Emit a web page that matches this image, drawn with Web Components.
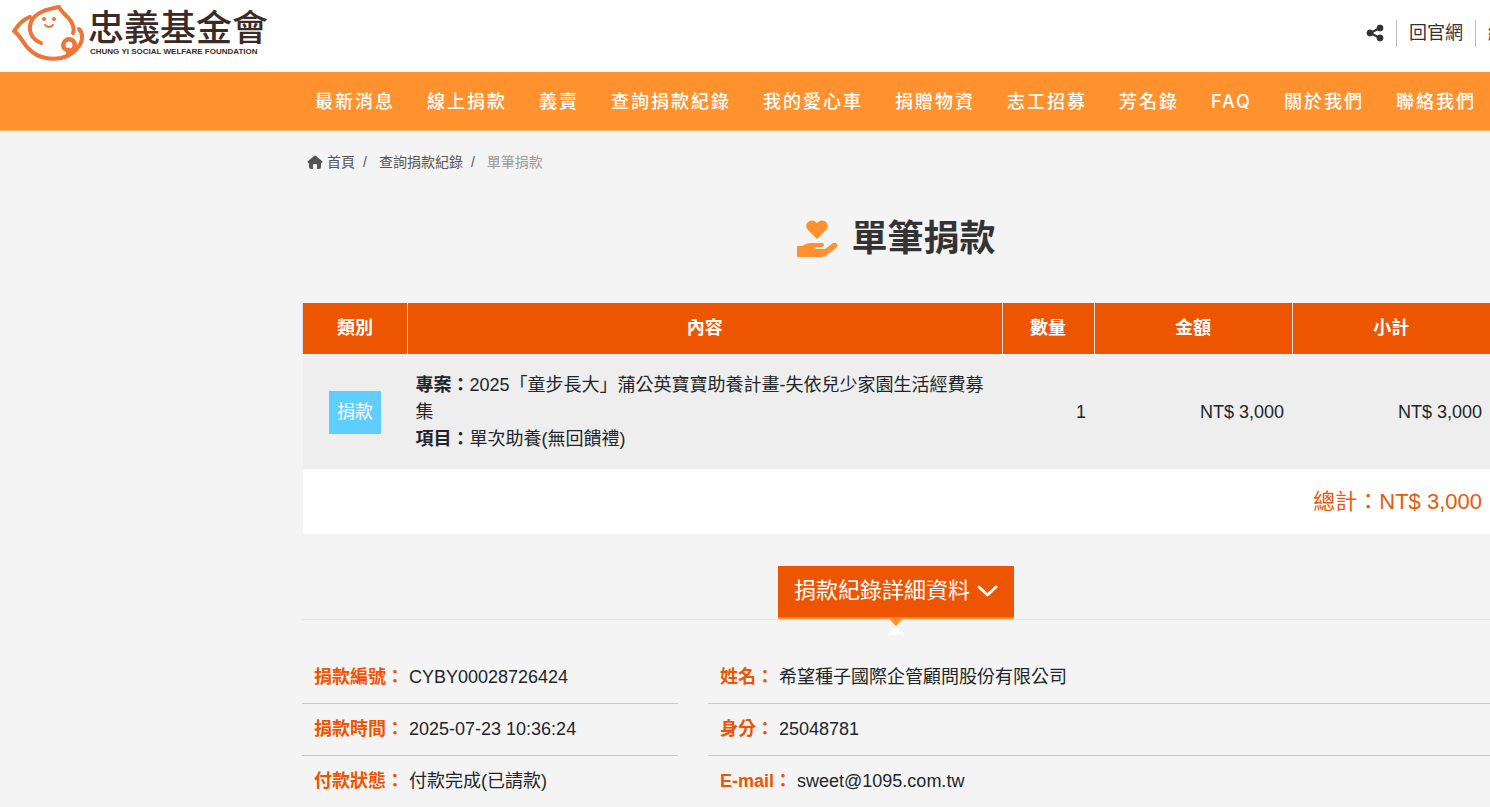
<!DOCTYPE html>
<html lang="zh-Hant">
<head>
<meta charset="utf-8">
<meta name="viewport" content="width=device-width, initial-scale=1">
<title>單筆捐款 - 忠義基金會</title>
<style>
  body {
    margin: 0;
    min-height: 100vh;
    overflow-x: hidden;
    background-color: #f4f4f4;
    color: #212529;
    font: 18px/27px "Liberation Sans", "Noto Sans CJK TC", sans-serif;
    --brand: #ff922e;
    --accent: #ee5500;
    --side: 302px;
  }
</style>
</head>
<body>
  <site-header></site-header>
  <site-nav></site-nav>
  <main>
    <donation-page></donation-page>
  </main>

<script>
const makeTemplate = (html) => {
  const template = document.createElement('template');
  template.innerHTML = html;
  return template;
};

class BaseElement extends HTMLElement {
  constructor() {
    super();
    this.attachShadow({ mode: 'open' });
    this.shadowRoot.append(this.constructor.template.content.cloneNode(true));
  }
}

class SiteLogo extends BaseElement {
  static template = makeTemplate(`
    <style>
      :host {
        display: block;
      }

      a {
        display: flex;
        gap: 3px;
        color: #3b2b26;
        text-decoration: none;
      }

      .name {
        display: block;
        font-size: 36px;
        line-height: 36px;
        margin-top: 7px;
        font-weight: 500;
      }

      .sub {
        display: block;
        font-size: 8px;
        line-height: 10px;
        font-weight: bold;
        padding-left: 2px;
      }
    </style>
    <a href="#">
      <svg width="74" height="60" viewBox="0 0 74 60" fill="none" stroke="#ee7437" stroke-width="4" stroke-linecap="round" stroke-linejoin="round" aria-hidden="true">
        <path d="M19 13C13 15 7 21 3 27C10 32 12 40 19 46C27 54 40 56 50 54C62 51 72 41 71 32C71 29 70 27 68 25"/>
        <path d="M30 39C20 35 17 26 20 18C24 8 37 5 48 3C51 10 60 13 62 22C63 25 63 27 62 29"/>
        <path d="M57 49C61 49 64 45 64 41C64 37 61 35 58 35C55 35 52 38 52 41C52 44 54 46 57 46"/>
        <circle cx="58" cy="41" r="5" stroke-width="3"/>
        <path d="M34 21Q38 25 42 21" stroke-width="2"/>
        <circle cx="33" cy="15" r="2" fill="#ee7437" stroke="none"/>
        <circle cx="43" cy="15" r="2" fill="#ee7437" stroke="none"/>
      </svg>
      <span>
        <span class="name">忠義基金會</span>
        <span class="sub">CHUNG YI SOCIAL WELFARE FOUNDATION</span>
      </span>
    </a>
  `);
}

class SiteHeader extends BaseElement {
  static template = makeTemplate(`
    <style>
      :host {
        display: block;
        overflow: hidden;
        background-color: #fff;
      }

      header {
        display: flex;
        justify-content: space-between;
        height: 68px;
        padding: 4px 0 0 11px;
      }

      .tools {
        display: flex;
        align-items: center;
        height: 58px;
        margin-right: -82px;
        white-space: nowrap;
      }

      .tools a, .tools button {
        color: #333;
        text-decoration: none;
        padding: 0 12px;
        border-left: 1px solid #bbb;
      }

      .tools button {
        display: flex;
        border: 0;
        background: none;
      }
    </style>
    <header>
      <site-logo></site-logo>
      <div class="tools">
        <button type="button" aria-label="分享">
          <svg width="18" height="18" viewBox="0 0 18 18" fill="#333" stroke="#333" aria-hidden="true">
            <path d="M14 4L4 9L14 14" fill="none" stroke-width="2"/>
            <circle cx="14" cy="4" r="3"/>
            <circle cx="4" cy="9" r="3"/>
            <circle cx="14" cy="14" r="3"/>
          </svg>
        </button>
        <a href="#">回官網</a>
        <a href="#">線上捐款</a>
      </div>
    </header>
  `);
}

class SiteNav extends BaseElement {
  static template = makeTemplate(`
    <style>
      :host {
        display: block;
        overflow: hidden;
        background-color: var(--brand);
        border-bottom: 1px solid #ffb36b;
      }

      nav {
        display: flex;
        padding-left: calc(var(--side) - 3px);
        white-space: nowrap;
      }

      a {
        padding: 16px 16px 15px;
        color: #fff;
        font-family: Inter, "Noto Sans CJK TC", sans-serif;
        font-weight: 500;
        letter-spacing: 2px;
        text-decoration: none;
      }
    </style>
    <nav></nav>
  `);

  connectedCallback() {
    const items = ['最新消息', '線上捐款', '義賣', '查詢捐款紀錄', '我的愛心車', '捐贈物資', '志工招募', '芳名錄', 'FAQ', '關於我們', '聯絡我們'];
    this.shadowRoot.querySelector('nav').innerHTML = items.map((item) => `<a href="#">${item}</a>`).join('');
  }
}

class BreadCrumb extends BaseElement {
  static template = makeTemplate(`
    <style>
      :host {
        display: block;
        font-size: 14px;
        line-height: 20px;
        color: #555;
      }

      ol {
        display: flex;
        margin: 0;
        padding: 0 0 0 5px;
        list-style: none;
      }

      li + li::before {
        content: "/";
        padding: 0 12px 0 8px;
      }

      a {
        color: inherit;
        text-decoration: none;
      }

      li:first-child a {
        display: flex;
        align-items: center;
        gap: 4px;
      }

      li:last-child a {
        color: #999;
      }
    </style>
    <ol>
      <li><a href="#">
        <svg width="16" height="14" viewBox="0 0 16 14" fill="#555" aria-hidden="true">
          <path d="M7 1Q8 0 9 1L15 6Q16 7 15 8H14V12Q14 14 12 14H10V10Q10 9 9 9H7Q6 9 6 10V14H4Q2 14 2 12V8H1Q0 7 1 6Z"/>
        </svg>首頁</a></li>
      <li><a href="#">查詢捐款紀錄</a></li>
      <li><a href="#" aria-current="page">單筆捐款</a></li>
    </ol>
  `);
}

class PageTitle extends BaseElement {
  static template = makeTemplate(`
    <style>
      :host {
        display: block;
      }

      h1 {
        display: flex;
        align-items: center;
        justify-content: center;
        gap: 13px;
        margin: 0;
        color: #333;
        font-size: 36px;
        line-height: 44px;
      }
    </style>
    <h1>
      <svg width="42" height="38" viewBox="0 0 42 38" fill="var(--brand)" aria-hidden="true">
        <path d="M21 19L12 10C9 7 10 2 14 1C17 0 19 1 21 3C23 1 25 0 28 1C32 2 33 7 30 10Z"/>
        <path d="M2 26H6L10 24Q12 23 15 23H26Q28 23 28 25Q28 27 26 27H19V29H29L37 23Q39 22 41 24Q42 26 40 28L31 35Q29 37 26 37H2Q1 37 1 36V27Q1 26 2 26Z"/>
      </svg>
      <slot></slot>
    </h1>
  `);
}

class DonationTable extends BaseElement {
  static template = makeTemplate(`
    <style>
      :host {
        display: block;
      }

      table {
        width: 100%;
        table-layout: fixed;
        border-collapse: collapse;
      }

      .kind {
        width: 105px;
      }

      .qty {
        width: 92px;
      }

      .price {
        width: 198px;
      }

      th {
        padding: 12px 8px;
        background-color: var(--accent);
        color: #fff;
        border: solid #dee2e6;
        border-width: 0 0 0 1px;
      }

      td {
        padding: 18px 8px 16px;
        text-align: right;
      }

      tbody {
        background-color: #eee;
      }

      .tag {
        text-align: center;
      }

      .tag span {
        display: inline-block;
        padding: 8px;
        background-color: #5dceff;
        color: #fff;
      }

      .text {
        text-align: left;
      }

      tfoot {
        background-color: #fff;
        color: #e8590c;
        font-size: 22px;
        line-height: 31px;
      }

      tfoot td {
        padding: 17px 8px;
      }
    </style>
    <table>
      <colgroup><col class="kind"><col><col class="qty"><col class="price"><col class="price"></colgroup>
      <thead>
        <tr><th scope="col">類別</th><th scope="col">內容</th><th scope="col">數量</th><th scope="col">金額</th><th scope="col">小計</th></tr>
      </thead>
      <tbody>
        <tr>
          <td class="tag"><span>捐款</span></td>
          <td class="text"><b>專案：</b>2025「童步長大」蒲公英寶寶助養計畫-失依兒少家園生活經費募集<br><b>項目：</b>單次助養(無回饋禮)</td>
          <td>1</td>
          <td>NT$ 3,000</td>
          <td>NT$ 3,000</td>
        </tr>
      </tbody>
      <tfoot>
        <tr><td colspan="5">總計：NT$ 3,000</td></tr>
      </tfoot>
    </table>
  `);
}

class DetailToggle extends BaseElement {
  static template = makeTemplate(`
    <style>
      :host {
        display: flex;
        justify-content: center;
        border-bottom: 1px solid #e6e6e6;
      }

      button {
        position: relative;
        display: flex;
        align-items: center;
        gap: 7px;
        padding: 9px 16px 10px;
        border: 0;
        border-bottom: 2px solid var(--brand);
        background-color: var(--accent);
        color: #fff;
        font: inherit;
        font-size: 22px;
        line-height: 32px;
      }

      .arrow {
        position: absolute;
        top: 100%;
        left: 50%;
        margin-left: -9px;
      }
    </style>
    <button type="button" aria-expanded="true">
      <slot></slot>
      <svg width="21" height="14" viewBox="0 0 21 14" fill="none" stroke="#fff" stroke-width="3" stroke-linecap="round" stroke-linejoin="round" aria-hidden="true">
        <path d="M2 3L10.500 11L19 3"/>
      </svg>
      <svg class="arrow" width="18" height="20" viewBox="0 0 18 20" aria-hidden="true">
        <path d="M0 0H18L9 9Z" fill="var(--brand)"/>
        <path d="M0 18L9 9L18 18Z" fill="#fff"/>
      </svg>
    </button>
  `);
}

class DetailList extends BaseElement {
  static template = makeTemplate(`
    <style>
      :host {
        display: block;
      }

      dl {
        margin: 0;
      }

      div {
        display: flex;
        gap: 5px;
        padding: 12px;
        border-bottom: 1px solid #c8c8c8;
      }

      dt {
        color: var(--accent);
        font-weight: bold;
      }

      dd {
        margin: 0;
      }
    </style>
    <dl></dl>
  `);

  set rows(rows) {
    this.shadowRoot.querySelector('dl').innerHTML = rows
      .map(([label, value]) => `<div><dt>${label}：</dt><dd>${value}</dd></div>`)
      .join('');
  }
}

class DonationPage extends BaseElement {
  static template = makeTemplate(`
    <style>
      :host {
        display: block;
        padding: 21px 0 0 var(--side);
      }

      page-title {
        margin: 45px 0 42px;
      }

      detail-toggle {
        margin: 32px 0;
      }

      .details {
        display: grid;
        grid-template-columns: repeat(3, 1fr);
        gap: 30px;
      }

      .donor {
        grid-column: span 2;
      }
    </style>
    <bread-crumb></bread-crumb>
    <page-title>單筆捐款</page-title>
    <donation-table></donation-table>
    <detail-toggle>捐款紀錄詳細資料</detail-toggle>
    <div class="details">
      <detail-list class="record"></detail-list>
      <detail-list class="donor"></detail-list>
    </div>
  `);

  connectedCallback() {
    this.shadowRoot.querySelector('.record').rows = [
      ['捐款編號', 'CYBY00028726424'],
      ['捐款時間', '2025-07-23 10:36:24'],
      ['付款狀態', '付款完成(已請款)'],
    ];
    this.shadowRoot.querySelector('.donor').rows = [
      ['姓名', '希望種子國際企管顧問股份有限公司'],
      ['身分', '25048781'],
      ['E-mail', 'sweet@1095.com.tw'],
    ];
  }
}

customElements.define('site-logo', SiteLogo);
customElements.define('site-header', SiteHeader);
customElements.define('site-nav', SiteNav);
customElements.define('bread-crumb', BreadCrumb);
customElements.define('page-title', PageTitle);
customElements.define('donation-table', DonationTable);
customElements.define('detail-toggle', DetailToggle);
customElements.define('detail-list', DetailList);
customElements.define('donation-page', DonationPage);
</script>
</body>
</html>
